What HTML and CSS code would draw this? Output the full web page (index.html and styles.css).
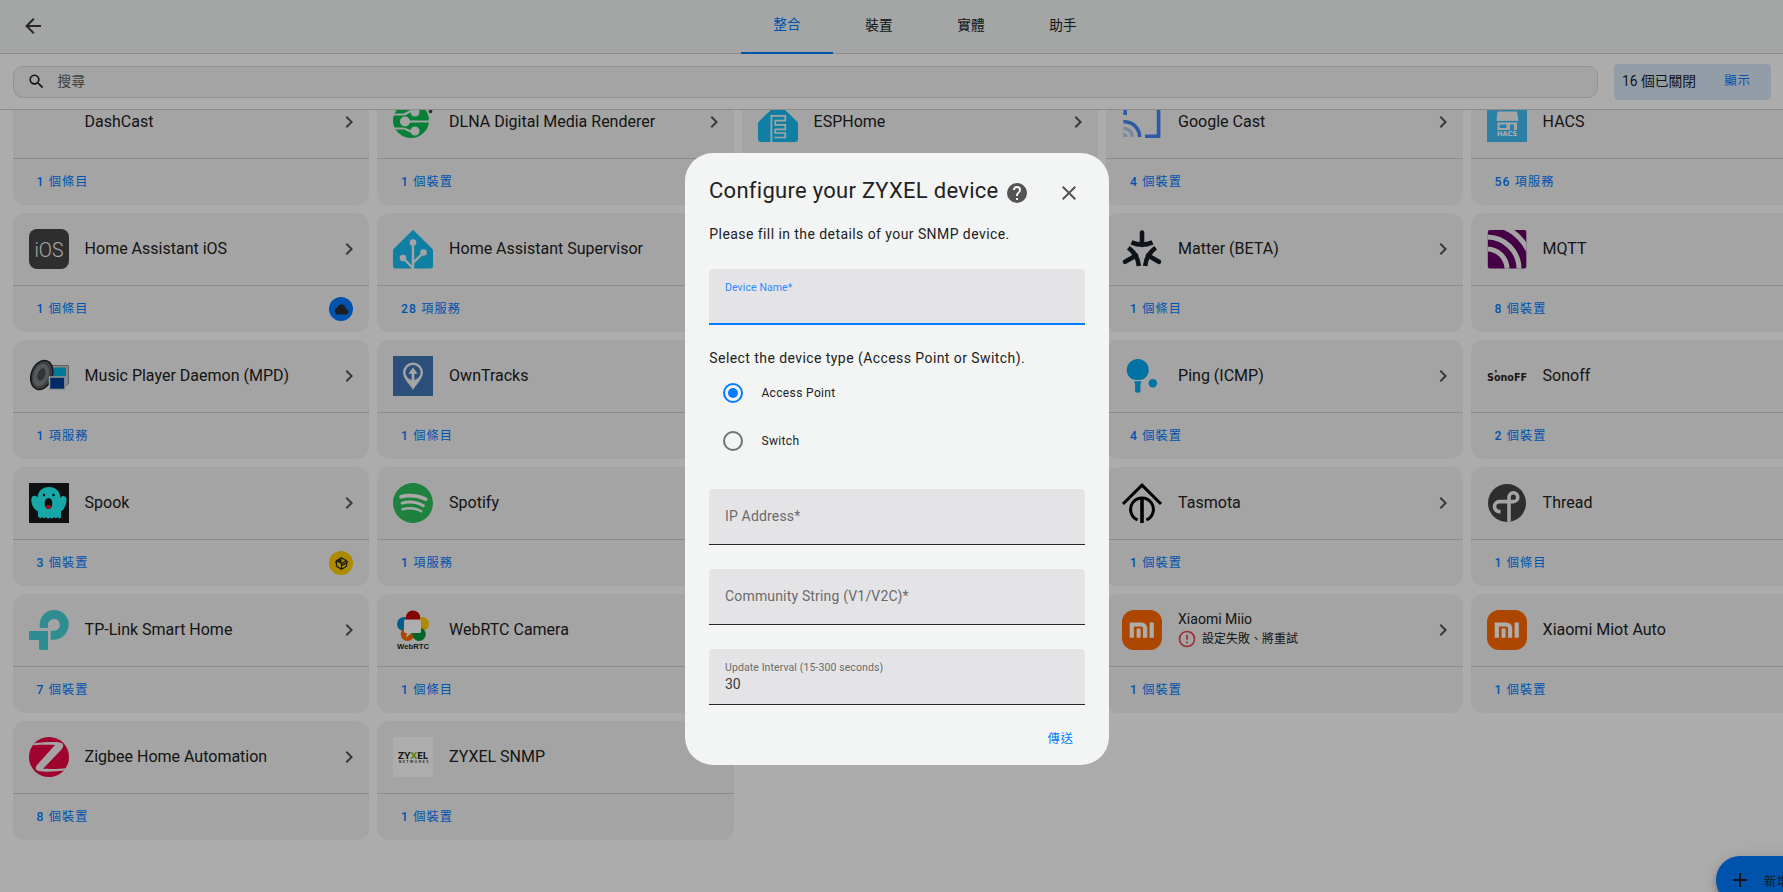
FILE: index.html
```html
<!DOCTYPE html>
<html lang="zh-Hant">
<head>
<meta charset="utf-8">
<title>整合</title>
<link rel="stylesheet" href="styles.css">
</head>
<body>
<div class="app">
  <header class="toolbar">
    <svg class="back" viewBox="0 0 24 24"><path d="M20,11V13H8L13.5,18.5L12.08,19.92L4.16,12L12.08,4.08L13.5,5.5L8,11H20Z"/></svg>
    <nav class="tabs">
      <a class="tab active">整合</a><a class="tab">裝置</a><a class="tab">實體</a><a class="tab">助手</a>
    </nav>
  </header>
  <div class="searchbar">
    <div class="search">
      <svg viewBox="0 0 24 24"><path d="M9.5,3A6.5,6.5 0 0,1 16,9.5C16,11.11 15.41,12.59 14.44,13.73L14.71,14H15.5L20.5,19L19,20.5L14,15.5V14.71L13.73,14.44C12.59,15.41 11.11,16 9.5,16A6.5,6.5 0 0,1 3,9.5A6.5,6.5 0 0,1 9.5,3M9.5,5C7,5 5,7 5,9.5C5,12 7,14 9.5,14C12,14 14,12 14,9.5C14,7 12,5 9.5,5Z"/></svg>
      <span>搜尋</span>
    </div>
    <div class="filter"><span>16 個已關閉</span><a>顯示</a></div>
  </div>
  <main class="content"><div class="grid" id="grid"></div></main>
  <button class="fab"><svg viewBox="0 0 24 24"><path d="M19,13H13V19H11V13H5V11H11V5H13V11H19V13Z"/></svg><span>新增整合</span></button>
</div>
<div class="scrim">
  <section class="dialog">
    <div class="head">
      <h1>Configure your ZYXEL device</h1>
      <svg class="help" viewBox="0 0 24 24"><path d="M15.07,11.25L14.17,12.17C13.45,12.89 13,13.5 13,15H11V14.5C11,13.39 11.45,12.39 12.17,11.67L13.41,10.41C13.78,10.05 14,9.55 14,9C14,7.89 13.1,7 12,7A2,2 0 0,0 10,9H8A4,4 0 0,1 12,5A4,4 0 0,1 16,9C16,9.88 15.64,10.67 15.07,11.25M13,19H11V17H13M12,2A10,10 0 0,0 2,12A10,10 0 0,0 12,22A10,10 0 0,0 22,12C22,6.47 17.5,2 12,2Z"/></svg>
      <svg class="close" viewBox="0 0 24 24"><path d="M19,6.41L17.59,5L12,10.59L6.41,5L5,6.41L10.59,12L5,17.59L6.41,19L12,13.41L17.59,19L19,17.59L13.41,12L19,6.41Z"/></svg>
    </div>
    <p class="note">Please fill in the details of your SNMP device.</p>
    <div class="field focused"><label>Device Name*</label></div>
    <p class="note type">Select the device type (Access Point or Switch).</p>
    <div class="radio checked"><i></i><span>Access Point</span></div>
    <div class="radio"><i></i><span>Switch</span></div>
    <div class="field empty first"><span>IP Address*</span></div>
    <div class="field empty"><span>Community String (V1/V2C)*</span></div>
    <div class="field filled"><label>Update Interval (15-300 seconds)</label><span>30</span></div>
    <div class="actions"><a>傳送</a></div>
  </section>
</div>
<script src="cards.js"></script>
</body>
</html>
```
FILE: styles.css
```css
* { box-sizing: border-box; }
body {
  margin: 0;
  overflow: hidden;
  font-family: Roboto, "Noto Sans CJK TC", sans-serif;
  color: #212121;
  background: #fefefe;
}
.app { height: 892px; overflow: hidden; display: flex; flex-direction: column; position: relative; }
svg { display: block; flex: none; }

.toolbar {
  flex: none;
  height: 54px;
  display: flex;
  align-items: stretch;
  background: #f2f5f4;
  border-bottom: 1px solid #cecece;
  padding-left: 21px;
}
.back { width: 24px; height: 24px; margin-top: 14px; fill: #3c3c3c; }
.tabs { display: flex; margin-left: 696px; height: 54px; }
.tab { width: 92px; display: flex; align-items: center; justify-content: center; font-size: 13.7px; padding-bottom: 5px; border-bottom: 2px solid transparent; }
.tab.active { color: #007bff; border-color: #007bff; padding-bottom: 7px; }

.searchbar {
  flex: none;
  height: 56px;
  display: flex;
  align-items: center;
  gap: 16px;
  padding: 0 12px 0 13px;
  border-bottom: 1px solid #cecece;
}
.search {
  flex: 1;
  height: 32px;
  display: flex;
  align-items: center;
  gap: 11.5px;
  padding-left: 13px;
  border: 1px solid #d6d6d6;
  border-radius: 10px;
  background: #f2f2f2;
  font-size: 13.7px;
  color: #5c5c5c;
}
.search svg { width: 19px; height: 19px; fill: #212121; }
.search span { padding-bottom: 4px; }
.filter {
  width: 157px;
  height: 36px;
  display: flex;
  align-items: center;
  justify-content: space-between;
  padding: 0 20px 4px 8px;
  border-radius: 4px;
  background: #d9e8f8;
  font-size: 13.8px;
}
.filter a { color: #007bff; font-size: 12.4px; letter-spacing: 1px; }

.content { flex: 1; min-height: 0; overflow: hidden; }
.grid {
  display: grid;
  grid-template-columns: repeat(5, 356.5px);
  grid-auto-rows: 119px;
  gap: 8px;
  margin: -24px 0 0 12.6px;
}
.card { border-radius: 12px; background: #f2f2f2; display: flex; flex-direction: column; }
.top {
  height: 73px;
  display: flex;
  align-items: center;
  gap: 16px;
  padding: 0 8px 0 16px;
  border-bottom: 1px solid #cecece;
}
.logo { width: 40px; height: 40px; overflow: visible; }
.titles { flex: 1; font-size: 16px; line-height: 22px; padding-bottom: 1px; }
.titles.small { font-size: 14px; line-height: 20px; padding: 0 0 2px; }
.err { display: flex; align-items: center; gap: 5px; font-size: 12px; height: 21px; }
.err svg { width: 20px; height: 20px; fill: #e8454a; margin-left: -1px; }
.chev { width: 24px; height: 24px; fill: #555; }
.bottom { flex: 1; display: flex; align-items: center; justify-content: space-between; padding: 0 16px 0 24px; }
.bottom a { color: #007bff; font-size: 12.2px; letter-spacing: 1.1px; padding-bottom: 2px; }
.bottom b { font-weight: 500; }
.badge { width: 24px; height: 24px; border-radius: 50%; background: #007bff; display: flex; align-items: center; justify-content: center; }
.badge.yellow { background: #ffcc00; }
.badge svg { width: 15px; height: 15px; fill: #2b2b2b; }

.fab {
  position: absolute;
  left: 1716px;
  top: 856px;
  width: 150px;
  height: 48px;
  display: flex;
  align-items: center;
  gap: 12px;
  padding: 0 0 0 12px;
  border: 0;
  border-radius: 24px;
  background: #007bff;
  box-shadow: 0 3px 5px -1px rgba(0,0,0,.2), 0 6px 10px rgba(0,0,0,.14), 0 1px 18px rgba(0,0,0,.12);
  font: 400 12px Roboto, "Noto Sans CJK TC", sans-serif;
  letter-spacing: 1.1px;
  color: #212121;
}
.fab svg { width: 24px; height: 24px; fill: #212121; }

.scrim {
  position: fixed;
  inset: 0;
  background: rgba(0,0,0,.32);
  padding: 153px 0 0 685px;
}
.dialog {
  width: 424px;
  height: 612px;
  border-radius: 28px;
  background: #f3f5f4;
  padding: 20px 24px 0;
}
.head { display: flex; align-items: center; height: 40px; }
.head h1 { margin: 0; font-size: 22px; line-height: 30px; font-weight: 400; letter-spacing: .28px; width: 296px; padding-bottom: 4px; white-space: nowrap; }
.help { width: 24px; height: 24px; fill: #545454; }
.close { width: 24px; height: 24px; margin-left: 28px; fill: #545454; }
.note { margin: 0; font-size: 14px; line-height: 20px; letter-spacing: .43px; padding: 11px 0 0 .3px; white-space: nowrap; }
.note.type { padding-top: 23px; }
.field {
  height: 56px;
  margin-bottom: 24px;
  padding: 0 16px;
  border-radius: 4px 4px 0 0;
  border-bottom: 1px solid #262626;
  background: #e4e4e6;
  font-size: 14px;
  color: #6b6b6b;
  display: flex;
  flex-direction: column;
}
.field label { font-size: 10.5px; line-height: 14px; letter-spacing: .1px; padding-top: 12px; }
.field.focused { margin: 25px 0 0; border-bottom: 2px solid #007bff; color: #2b8cff; }
.field.empty { justify-content: center; letter-spacing: .17px; }
.field.empty span { padding-bottom: 2px; }
.field.first { margin-top: 24px; }
.field.filled { margin-bottom: 0; }
.field.filled span { font-size: 14px; line-height: 18px; color: #3a3a3a; }
.radio { display: flex; align-items: center; height: 48px; padding-left: 14px; gap: 18.4px; font-size: 12px; letter-spacing: .36px; }
.note + .radio { margin-top: 1px; }
.radio i { width: 20px; height: 20px; border: 2px solid #6f7070; border-radius: 50%; display: flex; align-items: center; justify-content: center; }
.checked i { border-color: #007bff; }
.checked i::after { content: ""; width: 10px; height: 10px; border-radius: 50%; background: #007bff; }
.actions { display: flex; justify-content: flex-end; padding: 25px 11px 0; }
.actions a { color: #007bff; font-size: 12.2px; line-height: 18px; letter-spacing: 1.1px; }
```
FILE: cards.js
```js
const MI = '<rect width="40" height="40" rx="12" fill="#ff6900"/><path d="M9.8 27.7V14.5h9.6a3.7 3.7 0 0 1 3.7 3.7v9.5" fill="none" stroke="#fff" stroke-width="4.2"/><path d="M14.6 18.6h4v9.1h-4zM27.6 12.4h4.2v15.3h-4.2z" fill="#fff"/>';
const LOGOS = {
  none: '',
  ios: '<rect width="40" height="40" rx="8" fill="#444"/><text x="20" y="27.6" text-anchor="middle" font-family="Roboto" font-size="19.5" font-weight="300" fill="#f4f4f4" textLength="29" lengthAdjust="spacingAndGlyphs">iOS</text>',
  dlna: '<ellipse cx="18" cy="18.500" rx="18" ry="17.500" fill="#0cbc52"/><g fill="none" stroke="#f2f2f2" stroke-width="2.200"><path d="M0 12.500h10c4 0 5-3.500 9-3.500M0 26.500h10c4 0 5 3 9 3M13 19.500h24"/></g><g fill="#f2f2f2"><circle cx="22" cy="10" r="4.500"/><circle cx="12" cy="19.500" r="5"/><circle cx="22" cy="29" r="4.500"/></g><circle cx="37.500" cy="9.500" r="1.800" fill="#444"/>',
  esp: '<path d="M20 1 39 19.5q1 1 1 2.5V37q0 3-3 3H3q-3 0-3-3V22q0-1.500 1-2.500z" fill="#18bcf2"/><path d="M13.400 40V13.800H27.300V18.700H17.300V22.900H27.300V27.300H17.300V31H27.300V35.500H16.500" fill="none" stroke="#f2f2f2" stroke-width="1.700"/>',
  cast: '<path d="M3.2 13V5.5H36.6V34.2H23" fill="none" stroke="#4285f4" stroke-width="3.6"/><path d="M1.4 19.8A15 15 0 0 1 17.6 35" fill="none" stroke="#4285f4" stroke-width="3.6"/><path d="M1.4 26.4A9 9 0 0 1 10.6 35" fill="none" stroke="#b4c8ee" stroke-width="3.4"/><path d="M1.4 31a4 4 0 0 1 4 4h-4z" fill="#b4c8ee"/>',
  hacs: '<path d="M0 0h40v40H0z" fill="#41bdf5"/><path d="M10 6h21v2H10zM10.500 9.500h19.500l1.500 9q-1.800 1.200-3.600 0-1.800 1.200-3.600 0-1.800 1.200-3.600 0-1.800 1.200-3.600 0-1.800 1.200-3.600 0-2 1.200-4 0zM10.500 20.500h19.500v7.500H27v-5.500h-4v5.500H10.500z" fill="#f4f4f4"/><path d="M12.500 22.500h7v3.500h-7z" fill="#41bdf5"/><text x="20" y="34.400" text-anchor="middle" font-family="DejaVu Sans" font-weight="bold" font-size="6.600" fill="#fff" textLength="20">HACS</text>',
  ha: '<path d="M20 .8 39 19.500q1 1 1 2.500V37q0 2.500-3 2.500H3Q0 39.500 0 37V22q0-1.500 1-2.500z" fill="#18bcf2"/><g stroke="#f2f2f2" stroke-width="2.400" fill="none"><path d="M20 13V40M10 29 20.500 39.500M30.500 23.500 20 34"/></g><g fill="#f2f2f2"><circle cx="20" cy="13.500" r="3.300"/><circle cx="10" cy="29" r="3.300"/><circle cx="30.500" cy="23.500" r="3.300"/></g>',
  matter: '<g fill="none" stroke="#141c26" stroke-width="4.600" stroke-linecap="round"><g id="arm"><path d="M20 3.500V16"/><path d="M9.500 13.300Q20 18 30.500 13.300" stroke-linecap="butt"/></g><use href="#arm" transform="rotate(120 20 23)"/><use href="#arm" transform="rotate(240 20 23)"/></g>',
  mqtt: '<clipPath id="mq"><rect x=".8" y="1" width="38.500" height="38.500" rx="2"/></clipPath><g clip-path="url(#mq)"><path d="M0 0h40v40H0z" fill="#606"/><g fill="none" stroke="#f2f2f2" stroke-width="5"><circle cx="0" cy="40" r="20"/><circle cx="0" cy="40" r="32"/><circle cx="0" cy="40" r="45"/></g></g>',
  mpd: '<path d="M23 9.500h16.500v18l-2.500 2H23z" fill="#c9c9c9" stroke="#777" stroke-width=".8"/><path d="M24.500 11.500h12.500v10H24.500z" fill="#00aee0"/><ellipse cx="12.800" cy="19" rx="10.500" ry="15" transform="rotate(20 12.800 19)" fill="#5a5f62" stroke="#222" stroke-width="1.500"/><ellipse cx="12" cy="19" rx="7.500" ry="11.500" transform="rotate(20 12 19)" fill="#7c8488"/><ellipse cx="12.500" cy="18.500" rx="3.800" ry="6.500" transform="rotate(20 12.500 18.500)" fill="#4a4f52"/><path d="M20.500 21h15.500v12.500H20.500z" fill="#004098" stroke="#ddd" stroke-width="1.500"/>',
  own: '<path d="M0 0h40v40H0z" fill="#4174b6"/><path d="M20 32C17 27 11 22.500 11 16.500a9 9 0 0 1 18 0C29 22.500 23 27 20 32z" fill="#f2f2f2" stroke="#f2f2f2" stroke-width="2"/><circle cx="20" cy="16.500" r="7.600" fill="#4174b6"/><path d="M20 11.500l4.700 6.300h-3.300V25h-2.800v-7.200h-3.300z" fill="#f2f2f2"/>',
  ping: '<path d="M10 23.300A11 11 0 1 1 21.500 23.300Q15.700 24.600 10 23.300zM12.200 25.200h7.200l-1 3.500v7q-2.700 2-5.300 0v-7z" fill="#00aaf2"/><circle cx="30.800" cy="27.300" r="4.300" fill="#00aaf2"/>',
  sonoff: '<text x="0" y="25.300" font-family="DejaVu Sans" font-weight="bold" font-size="10.500" fill="#2b2220" textLength="40" lengthAdjust="spacingAndGlyphs">SonoFF</text><path d="M8.900 14v2.500" stroke="#2b2220" stroke-width="1.500"/>',
  spook: '<path d="M0 0h40v40H0z" fill="#15191b"/><path d="M20 4c7 0 11 4.500 11.500 11 1.500-3 5-2.500 6 .5.500 5-2 11-5.500 13v6q-2 2-3.500-.5-2 2.500-3.500 0-2 2.500-4 .5-2 2.500-4-.5-2 2.500-3.500 0-2 2.500-4.500-.5v-5C4 26 1.500 20 2.500 15c1-3 4.500-3 6-.5C9 8.500 13 4 20 4z" fill="#24f6f6"/><circle cx="15" cy="12" r="1.200"/><circle cx="24.500" cy="12" r="1.200"/><ellipse cx="19.500" cy="20.500" rx="3.800" ry="5.500" fill="#111"/><path d="M16.500 23q3-2 6 0-.5 3-3 3t-3-3z" fill="#d81b24"/>',
  spotify: '<circle cx="20" cy="20" r="19" fill="#f8f8f8"/><path transform="scale(1.6667)" d="M12 0C5.4 0 0 5.4 0 12s5.400 12 12 12 12-5.400 12-12S18.660 0 12 0zm5.521 17.340c-.24.359-.66.48-1.021.24-2.820-1.740-6.360-2.101-10.561-1.141-.418.122-.779-.179-.899-.539-.12-.421.18-.78.54-.9 4.560-1.021 8.520-.6 11.640 1.320.42.18.479.659.301 1.020zm1.440-3.300c-.301.42-.841.6-1.262.3-3.239-1.980-8.159-2.580-11.939-1.380-.479.12-1.020-.12-1.140-.6-.12-.48.12-1.021.6-1.141C9.600 9.900 15 10.561 18.720 12.840c.361.181.54.78.241 1.200zm.12-3.360C15.240 8.400 8.820 8.160 5.160 9.301c-.6.179-1.200-.181-1.380-.721-.18-.601.18-1.200.72-1.381 4.260-1.260 11.280-1.020 15.721 1.621.539.3.719 1.020.419 1.560-.299.421-1.020.599-1.559.3z" fill="#2dc05c"/>',
  tasmota: '<g fill="none" stroke="#000" stroke-width="3"><path d="M1 21 20 2.200 39 21M15.600 36.900A11.400 11.400 0 1 1 24.400 36.900"/><path d="M20 15v25" stroke-width="3.600"/></g>',
  thread: '<clipPath id="th"><circle cx="20" cy="20" r="19"/></clipPath><g clip-path="url(#th)"><path d="M0 0h40v40H0z" fill="#444"/><path d="M22 40V14a4.400 4.400 0 1 1 4.400 4.600H12.500a5 5 0 0 0 0 10h1" fill="none" stroke="#f2f2f2" stroke-width="3.600"/></g>',
  tplink: '<path d="M10.700 18V14.300a14.500 14.300 0 0 1 29 0c0 8.500-6.500 15.400-14.500 15.400H21.700V20.700h3.500a5.600 5.600 0 0 0 5.600-6.200c0-3-2.300-5.500-5.600-5.500S19 11.500 19 14.500V18zM1 21h18v17.500q0 1.500-1.500 1.500h-6q-1.500 0-1.500-1.500V30H1q-1 0-1-1v-7q0-1 1-1z" fill="#46d0d8"/>',
  webrtc: '<circle cx="11" cy="14" r="7" fill="#0089cc"/><circle cx="29" cy="14" r="7" fill="#fc0"/><circle cx="14.500" cy="24.300" r="6.700" fill="#f60"/><circle cx="26" cy="24.300" r="6.700" fill="#009939"/><circle cx="20" cy="7.700" r="7.200" fill="#c00000"/><path d="M12.500 9.500h14q1.500 0 1.500 1.500v10.500q0 1.500-1.500 1.500H18.500l-5.500 4.500 1-4.500h-1.500q-1.500 0-1.500-1.500V11q0-1.500 1.500-1.500z" fill="#fff"/><text x="20" y="39" text-anchor="middle" font-family="Liberation Sans" font-weight="bold" font-size="7.700" fill="#222" textLength="32">WebRTC</text>',
  mi: MI,
  zigbee: '<circle cx="20" cy="20" r="20" fill="#eb0443"/><path d="M5.500 6.300C14 5 26 4.700 31 5.400c4 1.100 4 3.600 1.500 7.100L14 31.800c8 .2 17 .2 24-.6l-3 2.400C25 35 15 35 9.500 34 6 33 6 30.500 8 28L26 8C20 7.700 12 7.800 4 8.300z" fill="#f2f2f2"/>',
  zyxel: '<path d="M0 0h40v40H0z" fill="#fff"/><text x="5" y="22" font-family="Lato" font-weight="900" font-size="9.600" fill="#222" textLength="30" lengthAdjust="spacingAndGlyphs">ZY<tspan fill="#7ab800">X</tspan>EL</text><text x="6" y="26.300" font-family="Lato" font-weight="900" font-size="2.900" fill="#222" textLength="29">NETWORKS</text>'
};
const CARDS = [
  ['none', 'DashCast', '1 個條目'], ['dlna', 'DLNA Digital Media Renderer', '1 個裝置'], ['esp', 'ESPHome', ''], ['cast', 'Google Cast', '4 個裝置'], ['hacs', 'HACS', '56 項服務'],
  ['ios', 'Home Assistant iOS', '1 個條目', 'cloud'], ['ha', 'Home Assistant Supervisor', '28 項服務'], null, ['matter', 'Matter (BETA)', '1 個條目'], ['mqtt', 'MQTT', '8 個裝置'],
  ['mpd', 'Music Player Daemon (MPD)', '1 項服務'], ['own', 'OwnTracks', '1 個條目'], null, ['ping', 'Ping (ICMP)', '4 個裝置'], ['sonoff', 'Sonoff', '2 個裝置'],
  ['spook', 'Spook', '3 個裝置', 'box'], ['spotify', 'Spotify', '1 項服務'], null, ['tasmota', 'Tasmota', '1 個裝置'], ['thread', 'Thread', '1 個條目'],
  ['tplink', 'TP-Link Smart Home', '7 個裝置'], ['webrtc', 'WebRTC Camera', '1 個條目'], null, ['mi', 'Xiaomi Miio', '1 個裝置', '', '設定失敗、將重試'], ['mi', 'Xiaomi Miot Auto', '1 個裝置'],
  ['zigbee', 'Zigbee Home Automation', '8 個裝置'], ['zyxel', 'ZYXEL SNMP', '1 個裝置']
];
const BADGES = {
  cloud: '<span class="badge"><svg viewBox="0 0 24 24"><path d="M6.500 20Q4.220 20 2.610 18.430 1 16.850 1 14.580 1 12.630 2.170 11.100 3.350 9.570 5.250 9.150 5.880 6.850 7.750 5.430 9.630 4 12 4 14.930 4 16.960 6.040 19 8.070 19 11 20.730 11.200 21.860 12.500 23 13.780 23 15.500 23 17.380 21.690 18.690 20.380 20 18.500 20Z"/></svg></span>',
  box: '<span class="badge yellow"><svg viewBox="0 0 24 24"><path d="M2,10.96C1.5,10.68 1.35,10.07 1.63,9.59L3.13,7C3.24,6.8 3.41,6.66 3.6,6.58L11.43,2.18C11.59,2.06 11.79,2 12,2C12.21,2 12.41,2.06 12.57,2.18L20.47,6.62C20.66,6.72 20.82,6.88 20.91,7.08L22.36,9.6C22.64,10.08 22.47,10.69 22,10.96L21,11.54V16.5C21,16.88 20.79,17.21 20.47,17.38L12.57,21.82C12.41,21.94 12.21,22 12,22C11.79,22 11.59,21.94 11.43,21.82L3.53,17.38C3.21,17.21 3,16.88 3,16.5V10.96C2.7,11.13 2.32,11.14 2,10.96M12,4.15L12,10.85L17.96,7.5L12,4.15M5,15.91L11,19.29V12.58L5,9.21V15.91M19,15.91V12.69L14,15.59C13.67,15.77 13.3,15.76 13,15.6V19.29L19,15.91M13.85,13.36L20.13,9.73L19.55,8.72L13.27,12.35L13.85,13.36Z"/></svg></span>'
};
const CHEVRON = '<svg class="chev" viewBox="0 0 24 24"><path d="M8.590,16.580L13.170,12L8.590,7.410L10,6L16,12L10,18L8.590,16.580Z"/></svg>';
const ALERT = '<svg viewBox="0 0 24 24"><path d="M11,15H13V17H11V15M11,7H13V13H11V7M12,2C6.470,2 2,6.500 2,12A10,10 0 0,0 12,22A10,10 0 0,0 22,12A10,10 0 0,0 12,2M12,20A8,8 0 0,1 4,12A8,8 0 0,1 12,4A8,8 0 0,1 20,12A8,8 0 0,1 12,20Z"/></svg>';
document.getElementById('grid').innerHTML = CARDS.map(c => {
  if (!c) return '<div class="card"></div>';
  const [logo, name, count, badge, err] = c;
  return `<div class="card"><div class="top"><svg class="logo" viewBox="0 0 40 40">${LOGOS[logo]}</svg>` +
    `<div class="titles${err ? ' small' : ''}">${name}${err ? `<div class="err">${ALERT}<span>${err}</span></div>` : ''}</div>${CHEVRON}</div>` +
    `<div class="bottom"><a>${count.replace(/^\d+/, '<b>$&</b>')}</a>${badge ? BADGES[badge] : ''}</div></div>`;
}).join('');
```
